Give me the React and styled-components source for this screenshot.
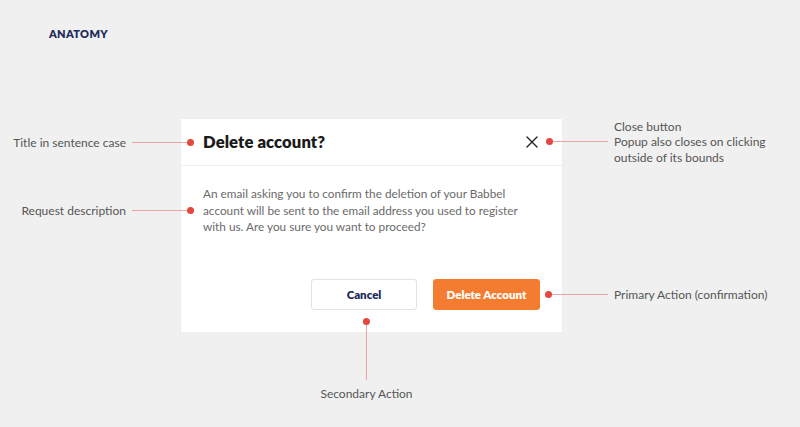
import React from "react";
import styled, { createGlobalStyle, css } from "styled-components";

const Global = createGlobalStyle`
  html, body { margin: 0; padding: 0; background: #f0f0f0; }
  body { font-family: "Lato", "Open Sans", sans-serif; }
  * { box-sizing: border-box; }
`;

const Page = styled.div`
  width: 800px;
  height: 427px;
  background: #f0f0f0;
  padding: 27px 0 0 49px;
  overflow: hidden;
`;

const Heading = styled.h1`
  margin: 0;
  font-size: 11px;
  line-height: 13px;
  font-weight: 800;
  letter-spacing: 0.3px;
  color: #1d2b5b;
`;

const Stage = styled.div`
  margin-top: 79px;
  margin-left: 132px;
  position: relative;
  width: 381px;
`;

const Dialog = styled.div`
  width: 381px;
  height: 213px;
  background: #fff;
  display: flex;
  flex-direction: column;
  box-shadow: 0 0 2px rgba(0, 0, 0, 0.04);
`;

const Header = styled.div`
  height: 47px;
  padding: 0 24px 0 22px;
  display: flex;
  align-items: center;
  justify-content: space-between;
  border-bottom: 1px solid #eeeeee;
`;

const Title = styled.h2`
  margin: 0;
  font-size: 16.6px;
  font-weight: 800;
  color: #1a1a1a;
  letter-spacing: 0.1px;
`;

const CloseButton = styled.button`
  border: 0;
  background: none;
  padding: 0;
  width: 12px;
  height: 12px;
  display: flex;
  cursor: pointer;
`;

const Body = styled.p`
  margin: 0;
  padding: 20px 22px 0 22px;
  font-size: 11.8px;
  line-height: 16.5px;
  color: #6a6a6a;
`;

const Footer = styled.div`
  margin-top: auto;
  padding: 0 22px 22px 0;
  display: flex;
  justify-content: flex-end;
  gap: 16px;
`;

const Button = styled.button`
  height: 31px;
  width: ${(p) => (p.$primary ? "107px" : "106px")};
  border-radius: 3px;
  font-family: inherit;
  font-size: 11.5px;
  font-weight: 800;
  cursor: pointer;
  border: 1px solid ${(p) => (p.$primary ? "#f47c30" : "#e2e2e2")};
  background: ${(p) => (p.$primary ? "#f47c30" : "#fff")};
  color: ${(p) => (p.$primary ? "#fff" : "#1d2b5b")};
`;

/* Annotation callouts on the diagram canvas */
const Callout = styled.div`
  position: absolute;
  display: flex;
  align-items: center;
  ${(p) =>
    p.$dir === "left" &&
    css`
      right: ${p.$right}px;
      top: ${p.$top}px;
      flex-direction: row;
    `}
  ${(p) =>
    p.$dir === "right" &&
    css`
      left: ${p.$left}px;
      top: ${p.$top}px;
      flex-direction: row;
    `}
  ${(p) =>
    p.$dir === "down" &&
    css`
      left: ${p.$left}px;
      top: ${p.$top}px;
      flex-direction: column;
      transform: translateX(-50%);
    `}
`;

const Dot = styled.span`
  flex: none;
  width: 7px;
  height: 7px;
  border-radius: 50%;
  background: #e5473e;
`;

const Line = styled.span`
  flex: none;
  background: #eba3a3;
  ${(p) =>
    p.$vertical
      ? css`
          width: 1px;
          height: ${p.$len}px;
        `
      : css`
          height: 1px;
          width: ${p.$len}px;
        `}
`;

const Label = styled.div`
  white-space: nowrap;
  font-size: 12px;
  line-height: 15.5px;
  color: #555555;
  text-align: ${(p) => p.$align || "left"};
  margin: ${(p) => p.$margin || "0"};
`;

const XIcon = () => (
  <svg width="12" height="12" viewBox="0 0 12 12" fill="none">
    <path d="M1 1L11 11M11 1L1 11" stroke="#222" strokeWidth="1.4" strokeLinecap="round" />
  </svg>
);

export default function App() {
  return (
    <>
      <Global />
      <Page>
        <Heading>ANATOMY</Heading>
        <Stage>
          <Dialog>
            <Header>
              <Title>Delete account?</Title>
              <CloseButton aria-label="Close">
                <XIcon />
              </CloseButton>
            </Header>
            <Body>
              An email asking you to confirm the deletion of your Babbel account will be sent
              to the email address you used to register with us. Are you sure you want to
              proceed?
            </Body>
            <Footer>
              <Button>Cancel</Button>
              <Button $primary>Delete Account</Button>
            </Footer>
          </Dialog>

          <Callout $dir="left" $right={368} $top={16}>
            <Label $align="right" $margin="0 6px 0 0">Title in sentence case</Label>
            <Line $len={55} />
            <Dot />
          </Callout>

          <Callout $dir="left" $right={368} $top={84}>
            <Label $align="right" $margin="0 6px 0 0">Request description</Label>
            <Line $len={55} />
            <Dot />
          </Callout>

          <Callout $dir="right" $left={365} $top={-0.5}>
            <Dot />
            <Line $len={55} />
            <Label $margin="0 0 0 6px">
              Close button
              <br />
              Popup also closes on clicking
              <br />
              outside of its bounds
            </Label>
          </Callout>

          <Callout $dir="right" $left={364} $top={168}>
            <Dot />
            <Line $len={56} />
            <Label $margin="0 0 0 6px">Primary Action (confirmation)</Label>
          </Callout>

          <Callout $dir="down" $left={185.5} $top={199}>
            <Dot />
            <Line $vertical $len={55} />
            <Label $align="center" $margin="6px 0 0 0">Secondary Action</Label>
          </Callout>
        </Stage>
      </Page>
    </>
  );
}
